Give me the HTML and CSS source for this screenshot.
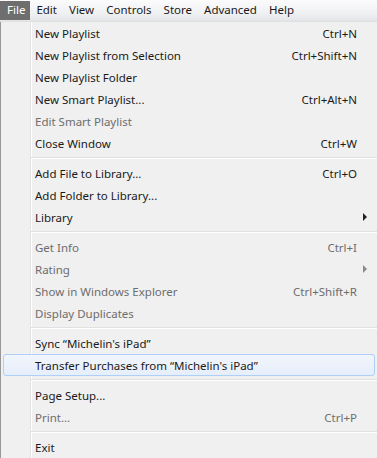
FILE: index.html
```html
<!DOCTYPE html>
<html lang="en">
<head>
  <meta charset="UTF-8" />
  <title>File menu</title>
  <link rel="stylesheet" href="styles.css">
</head>
<body>
  <nav class="menubar">
    <span class="bar-item active">File</span>
    <span class="bar-item">Edit</span>
    <span class="bar-item">View</span>
    <span class="bar-item">Controls</span>
    <span class="bar-item">Store</span>
    <span class="bar-item">Advanced</span>
    <span class="bar-item">Help</span>
  </nav>

  <div class="menu">
    <div class="item"><span>New Playlist</span><span class="key">Ctrl+N</span></div>
    <div class="item"><span>New Playlist from Selection</span><span class="key">Ctrl+Shift+N</span></div>
    <div class="item"><span>New Playlist Folder</span></div>
    <div class="item"><span>New Smart Playlist...</span><span class="key">Ctrl+Alt+N</span></div>
    <div class="item disabled"><span>Edit Smart Playlist</span></div>
    <div class="item"><span>Close Window</span><span class="key">Ctrl+W</span></div>
    <div class="sep"></div>
    <div class="item"><span>Add File to Library...</span><span class="key">Ctrl+O</span></div>
    <div class="item"><span>Add Folder to Library...</span></div>
    <div class="item sub"><span>Library</span><span class="arrow"></span></div>
    <div class="sep"></div>
    <div class="item disabled"><span>Get Info</span><span class="key">Ctrl+I</span></div>
    <div class="item disabled sub"><span>Rating</span><span class="arrow"></span></div>
    <div class="item disabled"><span>Show in Windows Explorer</span><span class="key">Ctrl+Shift+R</span></div>
    <div class="item disabled"><span>Display Duplicates</span></div>
    <div class="sep"></div>
    <div class="item"><span>Sync &ldquo;Michelin's iPad&rdquo;</span></div>
    <div class="item hover"><span>Transfer Purchases from &ldquo;Michelin's iPad&rdquo;</span></div>
    <div class="sep"></div>
    <div class="item"><span>Page Setup...</span></div>
    <div class="item disabled"><span>Print...</span><span class="key">Ctrl+P</span></div>
    <div class="sep"></div>
    <div class="item"><span>Exit</span></div>
  </div>
</body>
</html>
```

FILE: styles.css
```css
body {
  margin: 0;
  font-family: 'Noto Sans', sans-serif;
  font-size: 11.5px;
  color: #1a1a1a;
  background: #f0f0f0;
  overflow: hidden;
}

.menubar {
  display: flex;
  height: 22px;
  align-items: center;
  background: linear-gradient(to bottom, #fbfbfc 0%, #f0f1f3 60%, #e3e5e8 100%);
  border-bottom: 1px solid #e0e0e0;
  box-sizing: border-box;
}

.bar-item {
  padding: 1px 6px 2px;
  line-height: 16px;
}

.bar-item.active {
  background: #6e6e6e;
  color: #ffffff;
  padding-left: 7px;
  padding-right: 5px;
}

.menu {
  width: 376px;
  border-left: 1px solid #979797;
  background: linear-gradient(to right, #f0f0f0 29px, #e2e3e3 29px, #e2e3e3 30px, #ffffff 30px, #ffffff 31px, #f0f0f0 31px);
}

.item {
  display: flex;
  justify-content: space-between;
  align-items: center;
  height: 22px;
  margin: 0 2px;
  padding: 0 17px 0 31px;
  box-sizing: border-box;
  border: 1px solid transparent;
  border-radius: 3px;
}

.item.sub {
  padding-right: 7px;
}

.key {
  text-align: right;
}

.disabled {
  color: #6d6d6d;
}

.arrow {
  width: 0;
  height: 0;
  border-top: 4px solid transparent;
  border-bottom: 4px solid transparent;
  border-left: 4px solid #222;
}

.disabled .arrow {
  border-left-color: #8a8a8a;
}

.hover {
  border-color: #aecff7;
  background: linear-gradient(to bottom, #f2f6fc, #e5eefa);
}

.sep {
  height: 8px;
  margin-left: 30px;
  background: linear-gradient(to bottom, transparent 3px, #e0e0e0 3px, #e0e0e0 4px, #ffffff 4px, #ffffff 5px, transparent 5px);
}
```
